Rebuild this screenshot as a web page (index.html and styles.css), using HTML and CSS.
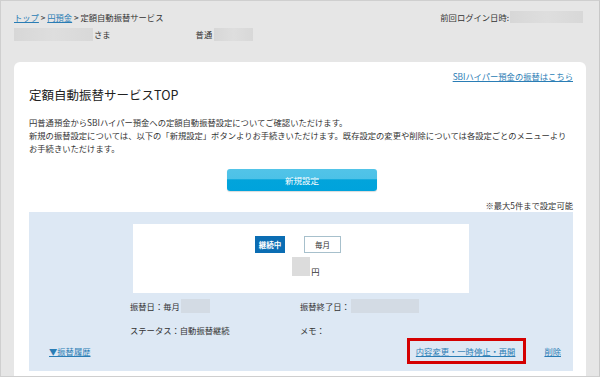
FILE: index.html
```html
<!DOCTYPE html>
<html lang="ja">
<head>
<meta charset="utf-8">
<link rel="stylesheet" href="styles.css">
</head>
<body>
<div class="frame">
  <div class="top-row">
    <div class="crumbs"><a href="#">トップ</a> &gt; <a href="#">円預金</a> &gt; 定額自動振替サービス</div>
    <div class="last-login">前回ログイン日時:<span class="blur blur-login"></span></div>
  </div>
  <div class="user-row">
    <span class="blur blur-name"></span><span class="sama">さま</span>
    <span class="acct">普通</span><span class="blur blur-acct"></span>
  </div>

  <div class="card">
    <div class="card-link"><a href="#">SBIハイパー預金の振替はこちら</a></div>
    <h1 class="title">定額自動振替サービスTOP</h1>
    <p class="intro">円普通預金からSBIハイパー預金への定額自動振替設定についてご確認いただけます。<br>新規の振替設定については、以下の「新規設定」ボタンよりお手続きいただけます。既存設定の変更や削除については各設定ごとのメニューより<br>お手続きいただけます。</p>
    <div class="btn-row"><button class="btn-new">新規設定</button></div>
    <div class="note">※最大5件まで設定可能</div>

    <div class="panel">
      <div class="summary">
        <div class="badges"><span class="badge-on">継続中</span><span class="badge-freq">毎月</span></div>
        <div class="amount"><span class="blur blur-amt"></span><span class="yen">円</span></div>
      </div>
      <div class="details">
        <div class="item">振替日：毎月<span class="blur blur-day"></span></div>
        <div class="item">振替終了日：<span class="blur blur-end"></span></div>
        <div class="item">ステータス：自動振替継続</div>
        <div class="item">メモ：</div>
      </div>
      <div class="actions">
        <a href="#" class="history">▼振替履歴</a>
        <div class="right-actions">
          <a href="#" class="change">内容変更・一時停止・再開<span class="highlight"></span></a>
          <a href="#" class="delete">削除</a>
        </div>
      </div>
    </div>
  </div>
</div>
</body>
</html>
```

FILE: styles.css
```css
* { box-sizing: border-box; }
html, body { margin: 0; padding: 0; }
body {
  font-family: "Noto Sans CJK JP", "Noto Sans", sans-serif;
  font-size: 8.3px;
  color: #333;
  background: #e6e6e6;
}
a { color: #2a7db5; text-decoration: underline; }
.frame {
  width: 600px;
  height: 377px;
  border: 1px solid #cfcfcf;
  border-right-color: #c8c8c8;
  background: #e6e6e6;
  padding: 10px 13px 0 13px;
  overflow: hidden;
}
.top-row {
  display: flex;
  justify-content: space-between;
  align-items: center;
  height: 12px;
  line-height: 12px;
}
.last-login { display: flex; align-items: center; margin-right: 3px; }
.blur {
  display: inline-block;
  background: linear-gradient(90deg, #d7d7d7, #dedede 50%, #d8d8d8);
  filter: blur(0.6px);
  vertical-align: middle;
}
.blur-login { width: 73px; height: 12px; margin-left: 1px; }
.user-row {
  display: flex;
  align-items: center;
  margin-top: 4px;
  height: 14px;
}
.blur-name { width: 79px; height: 13px; }
.sama { margin-left: 1px; }
.acct { margin-left: 85px; }
.blur-acct { width: 39px; height: 13px; margin-left: 2px; }

.card {
  margin-top: 21px;
  background: #fff;
  border-radius: 6px;
  height: 330px;
  padding: 8px 13px 0 15px;
}
.card-link { text-align: right; line-height: 12px; }
.title {
  font-size: 12.5px;
  font-weight: normal;
  margin: 4px 0 0 0;
  line-height: 18px;
  color: #222;
}
.intro {
  margin: 12px 0 0 0;
  line-height: 13px;
}
.btn-row { display: flex; justify-content: center; margin-top: 14px; }
.btn-new {
  width: 150px;
  height: 22px;
  border: none;
  border-radius: 3px;
  background: linear-gradient(180deg, #52c4e8 0, #4cc1e7 47%, #02a4db 48%, #00a3dc 100%);
  box-shadow: 0 1px 1px rgba(0,0,0,0.15);
  color: #fff;
  font-family: inherit;
  font-size: 8.5px;
  padding: 0;
  margin-left: 2px;
}
.note { text-align: right; margin-top: 9px; line-height: 11px; }
.panel {
  margin-top: 1px;
  background: #dde8f4;
  height: 159px;
  padding: 12px 0 0 0;
}
.summary {
  width: 336px;
  height: 69px;
  margin: 0 auto;
  background: #fff;
  padding-top: 12px;
  display: flex;
  flex-direction: column;
  align-items: center;
}
.badges { display: flex; gap: 19px; margin-right: 6px; }
.badge-on {
  width: 30px; height: 17px;
  background: #0b6db3;
  color: #fff;
  font-size: 7.5px;
  display: flex; align-items: center; justify-content: center;
  font-weight: bold;
}
.badge-freq {
  width: 37px; height: 17px;
  border: 1px solid #a7c0cc;
  display: flex; align-items: center; justify-content: center;
  font-size: 7.5px;
}
.amount { display: flex; align-items: flex-end; margin-top: 4px; margin-right: -10px; }
.blur-amt { width: 18px; height: 19px; background: #dcdcdc; }
.yen { margin-left: 1px; line-height: 10px; }
.details {
  display: grid;
  grid-template-columns: 170px 170px;
  row-gap: 9px;
  padding-left: 101px;
  margin-top: 5px;
}
.item { display: flex; align-items: center; height: 15px; }
.blur-day { width: 29px; height: 14px; background: #d3dbe4; margin-left: 1px; }
.blur-end { width: 68px; height: 14px; background: #d3dbe4; margin-left: 1px; }
.actions {
  display: flex;
  justify-content: space-between;
  align-items: center;
  margin-top: 8px;
  padding: 0 12px 0 20px;
}
.right-actions { display: flex; gap: 29px; }
.change { position: relative; }
.highlight {
  position: absolute;
  left: -9px; right: -11px;
  top: -7px; bottom: -7px;
  border: 3px solid #d40000;
  pointer-events: none;
}
```
